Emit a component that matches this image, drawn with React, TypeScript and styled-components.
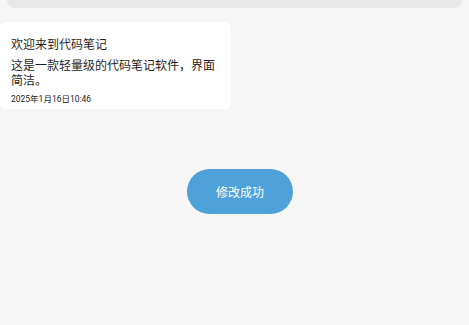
import React from "react";
import styled, { createGlobalStyle } from "styled-components";

const GlobalStyle = createGlobalStyle`
	html, body {
		margin: 0;
		padding: 0;
		background: #f6f6f6;
		font-family: "Noto Sans CJK SC", "Noto Sans", sans-serif;
		color: #1f1f1f;
	}
`;

const Page = styled.div`
	position: relative;
	width: 469px;
	height: 325px;
	overflow: hidden;
	background: #f6f6f6;
`;

const SearchBar = styled.div`
	height: 8px;
	margin: 0 7px;
	background: #e8e8e8;
	border-radius: 0 0 10px 10px;
`;

const List = styled.div`
	padding-top: 14px;
	display: flex;
	flex-direction: column;
	gap: 8px;
`;

const NoteCard = styled.div`
	width: 231px;
	box-sizing: border-box;
	padding: 13px 11px 4px 11px;
	background: #ffffff;
	border-radius: 6px;
`;

const Title = styled.div`
	font-size: 12px;
	line-height: 18px;
	margin-bottom: 4px;
`;

const Body = styled.div`
	font-size: 12px;
	line-height: 15px;
	margin-bottom: 6px;
`;

const DateText = styled.div`
	font-family: Roboto, "Noto Sans CJK SC", sans-serif;
	font-size: 8.5px;
	line-height: 12px;
	color: #222;
`;

const Toast = styled.div`
	position: absolute;
	left: 187px;
	top: 169px;
	width: 106px;
	height: 45px;
	border-radius: 23px;
	background: #4fa1d9;
	color: #ffffff;
	font-size: 12px;
	display: flex;
	align-items: center;
	justify-content: center;
`;

export default function App() {
	return (
		<Page>
			<GlobalStyle />
			<SearchBar />
			<List>
				<NoteCard>
					<Title>欢迎来到代码笔记</Title>
					<Body>这是一款轻量级的代码笔记软件，界面简洁。</Body>
					<DateText>2025年1月16日10:46</DateText>
				</NoteCard>
			</List>
			<Toast>修改成功</Toast>
		</Page>
	);
}
